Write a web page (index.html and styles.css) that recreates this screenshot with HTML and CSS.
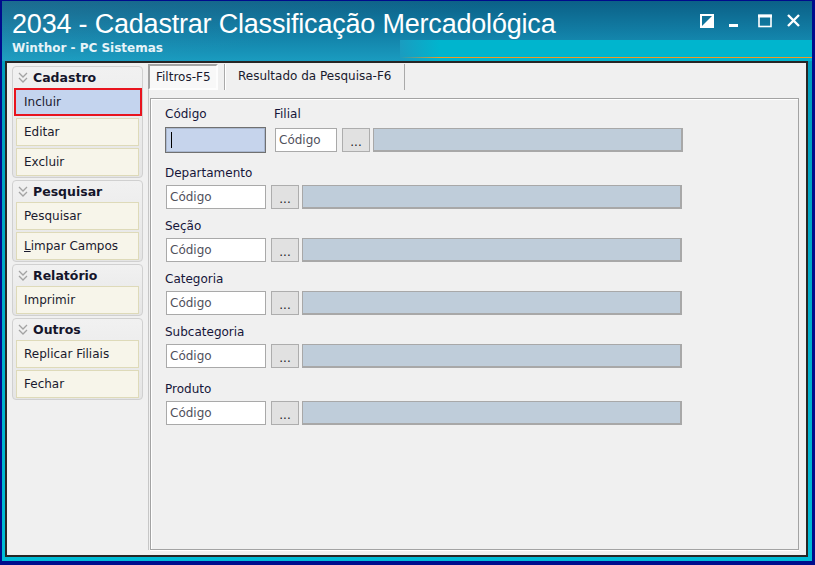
FILE: index.html
```html
<!DOCTYPE html>
<html lang="pt-BR">
<head>
    <meta charset="UTF-8">
    <meta name="viewport" content="width=device-width, initial-scale=1.0">
    <title>2034 - Cadastrar Classificação Mercadológica</title>
    <link rel="stylesheet" href="styles.css">
</head>
<body>
    <div class="window">
        <div class="titlebar">
            <div class="title-row">
                <h1 class="title">2034 - Cadastrar Classificação Mercadológica</h1>
                <svg class="controls" width="102" height="16" viewBox="0 0 102 16">
                    <!-- restore / skin -->
                    <rect x="1" y="2" width="12" height="12" fill="none" stroke="#fff" stroke-width="2"/>
                    <polygon points="13,2 13,14 1,14" fill="#fff"/>
                    <!-- minimize -->
                    <rect x="29" y="11" width="9" height="3" fill="#fff"/>
                    <!-- maximize -->
                    <rect x="59" y="2.5" width="12" height="11" fill="none" stroke="#fff" stroke-width="1.6"/>
                    <rect x="58" y="1.5" width="14" height="3" fill="#fff"/>
                    <!-- close -->
                    <path d="M88 2 L99 13 M99 2 L88 13" stroke="#fff" stroke-width="2.4"/>
                </svg>
            </div>
            <div class="sub-row">
                <span class="subtitle">Winthor - PC Sistemas</span>
                <div class="strip"></div>
            </div>
        </div>

        <div class="client">
            <aside class="sidebar">
                <div class="group">
                    <div class="group-head">
                        <svg class="chev" width="11" height="12" viewBox="0 0 11 12"><path d="M1 1 L5 5 L9 1 M1 6 L5 10 L9 6" fill="none" stroke="#a3a3a3" stroke-width="1.3"/></svg>
                        <span>Cadastro</span>
                    </div>
                    <div class="btn selected">Incluir</div>
                    <div class="btn">Editar</div>
                    <div class="btn">Excluir</div>
                </div>
                <div class="group">
                    <div class="group-head">
                        <svg class="chev" width="11" height="12" viewBox="0 0 11 12"><path d="M1 1 L5 5 L9 1 M1 6 L5 10 L9 6" fill="none" stroke="#a3a3a3" stroke-width="1.3"/></svg>
                        <span>Pesquisar</span>
                    </div>
                    <div class="btn">Pesquisar</div>
                    <div class="btn"><u>L</u>impar Campos</div>
                </div>
                <div class="group">
                    <div class="group-head">
                        <svg class="chev" width="11" height="12" viewBox="0 0 11 12"><path d="M1 1 L5 5 L9 1 M1 6 L5 10 L9 6" fill="none" stroke="#a3a3a3" stroke-width="1.3"/></svg>
                        <span>Relatório</span>
                    </div>
                    <div class="btn">Imprimir</div>
                </div>
                <div class="group">
                    <div class="group-head">
                        <svg class="chev" width="11" height="12" viewBox="0 0 11 12"><path d="M1 1 L5 5 L9 1 M1 6 L5 10 L9 6" fill="none" stroke="#a3a3a3" stroke-width="1.3"/></svg>
                        <span>Outros</span>
                    </div>
                    <div class="btn">Replicar Filiais</div>
                    <div class="btn">Fechar</div>
                </div>
            </aside>

            <main class="tabs">
                <div class="tab-row">
                    <div class="tab active">Filtros-F5</div>
                    <div class="tab">Resultado da Pesquisa-F6</div>
                </div>
                <div class="sheet">
                    <div class="panel">
                        <div class="first-row">
                            <div class="col-codigo">
                                <div class="label">Código</div>
                                <div class="input focused"><span class="caret"></span></div>
                            </div>
                            <div class="col-filial">
                                <div class="label">Filial</div>
                                <div class="input-row">
                                    <div class="input small">Código</div>
                                    <div class="dots">...</div>
                                    <div class="desc short"></div>
                                </div>
                            </div>
                        </div>

                        <div class="field">
                            <div class="label">Departamento</div>
                            <div class="input-row">
                                <div class="input">Código</div>
                                <div class="dots">...</div>
                                <div class="desc"></div>
                            </div>
                        </div>
                        <div class="field">
                            <div class="label">Seção</div>
                            <div class="input-row">
                                <div class="input">Código</div>
                                <div class="dots">...</div>
                                <div class="desc"></div>
                            </div>
                        </div>
                        <div class="field">
                            <div class="label">Categoria</div>
                            <div class="input-row">
                                <div class="input">Código</div>
                                <div class="dots">...</div>
                                <div class="desc"></div>
                            </div>
                        </div>
                        <div class="field">
                            <div class="label">Subcategoria</div>
                            <div class="input-row">
                                <div class="input">Código</div>
                                <div class="dots">...</div>
                                <div class="desc"></div>
                            </div>
                        </div>
                        <div class="field produto">
                            <div class="label">Produto</div>
                            <div class="input-row">
                                <div class="input">Código</div>
                                <div class="dots">...</div>
                                <div class="desc"></div>
                            </div>
                        </div>
                    </div>
                </div>
            </main>
        </div>
    </div>
</body>
</html>
```

FILE: styles.css
```css
body {
    margin: 0;
    width: 815px;
    height: 565px;
    overflow: hidden;
    background-color: #000c8c;
    font-family: "DejaVu Sans", Verdana, sans-serif;
    font-size: 12px;
    color: #1a1a2e;
}

.window {
    margin: 1px 0 0 2px;
    width: 810px;
    height: 560px;
    display: flex;
    flex-direction: column;
    background: linear-gradient(#0099b8, #00bcd6);
}

/* title bar */
.titlebar {
    height: 60px;
    flex: none;
    display: flex;
    flex-direction: column;
    background:
        linear-gradient(170deg, rgba(255,255,255,0.07) 0%, rgba(255,255,255,0) 45%),
        linear-gradient(#0b6087 0%, #1280a7 55%, #1a9cc0 100%);
}

.title-row {
    height: 39px;
    display: flex;
    justify-content: space-between;
    align-items: flex-start;
    padding: 0 10px 0 10px;
}

.title {
    margin: 10px 0 0 0;
    font-family: "Liberation Sans", Arial, sans-serif;
    font-weight: normal;
    font-size: 27px;
    line-height: 27px;
    letter-spacing: -0.2px;
    color: #fff;
}

.controls {
    margin-top: 12px;
}

.sub-row {
    height: 21px;
    display: flex;
}

.subtitle {
    width: 388px;
    padding-left: 10px;
    height: 17px;
    line-height: 17px;
    font-weight: bold;
    font-size: 12px;
    color: #e6f3f8;
}

.strip {
    flex: 1;
    background:
        linear-gradient(90deg, #1a9cc0 0, rgba(26,156,192,0) 40px),
        linear-gradient(#00b5ce 0, #00b5ce 17px, #f19a22 17px, #f19a22 18.5px, #00b5ce 18.5px);
}

/* client area */
.client {
    flex: 1;
    margin: 0 4px 4px 3px;
    border: 2px solid #262626;
    background-color: #f0f0f0;
    display: flex;
    padding: 1px 7px 5px 5px;
}

.sidebar {
    width: 131px;
    flex: none;
    margin-top: 2px;
}

.group {
    border: 1px solid #d0d0d0;
    border-radius: 4px;
    background: linear-gradient(#f1f1f1, #e5e5e5);
    padding: 0 3px 1px 3px;
    margin-bottom: 2px;
}

.group-head {
    height: 21px;
    display: flex;
    align-items: center;
    gap: 4px;
    padding-left: 2px;
    font-weight: bold;
    font-size: 12.5px;
    color: #15152a;
}

.btn {
    height: 28px;
    box-sizing: border-box;
    border: 1px solid #dedab9;
    background-color: #f7f5ea;
    padding-left: 7px;
    line-height: 26px;
    margin-bottom: 2px;
    color: #1a1a2e;
}

.btn:last-child {
    margin-bottom: 0;
}

.btn.selected {
    margin: 0 0 2px -2px;
    width: 128px;
    border: 2px solid #e8141e;
    background-color: #c4d4ee;
    padding-left: 8px;
    line-height: 24px;
}

/* tabs */
.tabs {
    flex: 1;
    margin-left: 5px;
    display: flex;
    flex-direction: column;
}

.tab-row {
    height: 26px;
    display: flex;
    flex: none;
}

.tab {
    box-sizing: border-box;
    height: 26px;
    line-height: 24px;
    margin-left: 6px;
    padding: 0 13px;
    border-left: 1px solid #a9a9a9;
    border-right: 1px solid #a9a9a9;
    box-shadow: inset 1px 0 0 #fff;
}

.tab.active {
    margin-left: 0;
    width: 70px;
    padding: 0 0 0 6px;
    border: 2px solid;
    border-color: #a3a3a3 #fdfdfd #fdfdfd #a3a3a3;
    background-color: #f8f8f8;
    box-shadow: none;
    line-height: 22px;
}

.sheet {
    flex: 1;
    border-left: 1px solid #c6c6c6;
    padding: 8px 0 0 1px;
    display: flex;
}

.panel {
    flex: 1;
    border: 1px solid #a3a3a3;
    box-shadow: inset 1px 1px 0 #fff, 0 1px 0 #fff;
    padding: 8px 0 0 14px;
}

/* form fields */
.label {
    height: 15px;
    line-height: 15px;
    color: #16163a;
}

.first-row {
    display: flex;
}

.col-codigo {
    width: 101px;
}

.col-codigo .label {
    margin-bottom: 5px;
}

.col-filial {
    margin-left: 8px;
}

.col-filial .label {
    margin-bottom: 6px;
}

.input-row {
    display: flex;
    height: 24px;
}

.input {
    box-sizing: border-box;
    width: 100px;
    height: 24px;
    margin-left: 1px;
    border: 1px solid #a9a9a9;
    background-color: #fff;
    padding-left: 3px;
    line-height: 22px;
    color: #50505c;
}

.input.small {
    width: 62px;
}

.input.focused {
    width: 101px;
    height: 26px;
    margin-left: 0;
    border: 1px solid #707070;
    box-shadow: inset 0 0 0 1px #aab8d0;
    background-color: #c6d4ec;
    position: relative;
}

.caret {
    position: absolute;
    left: 5px;
    top: 4px;
    width: 1px;
    height: 16px;
    background-color: #000;
}

.dots {
    box-sizing: border-box;
    width: 28px;
    height: 24px;
    margin-left: 5px;
    border: 1px solid #adadad;
    background-color: #e1e1e1;
    text-align: center;
    line-height: 27px;
    overflow: hidden;
    color: #222;
}

.desc {
    box-sizing: border-box;
    width: 380px;
    height: 24px;
    margin-left: 3px;
    border: 1px solid #a8a8a8;
    border-width: 1px 2px 2px 1px;
    background-color: #bfcdda;
}

.desc.short {
    width: 310px;
}

.field {
    margin-top: 10px;
}

.field .label {
    margin-bottom: 4px;
}

.first-row + .field {
    margin-top: 13px;
}

.field.produto {
    margin-top: 14px;
}
```
